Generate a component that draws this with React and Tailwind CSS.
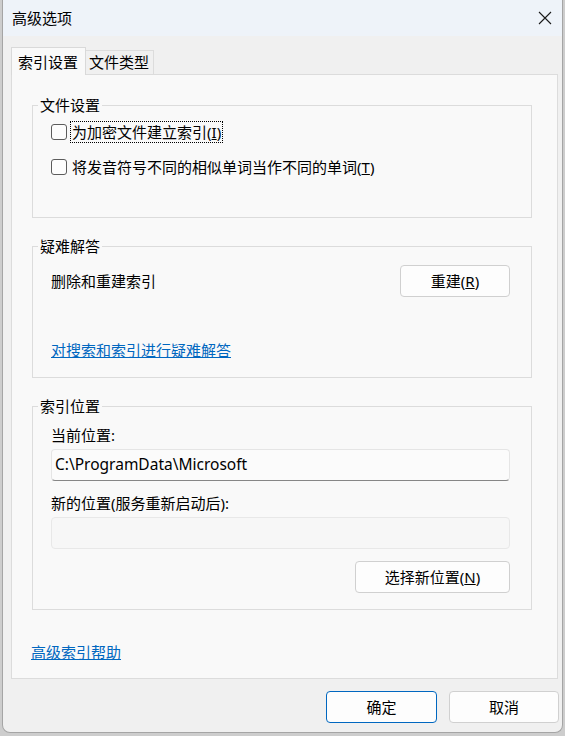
const Btn = ({ children, className = '' }) => (
  <button
    type="button"
    className={`h-[32px] rounded-[4px] border bg-[#fdfdfd] text-[15px] leading-[20px] text-black ${className}`}
  >
    {children}
  </button>
);

const Group = ({ title, className = '', children }) => (
  <fieldset className={`w-[500px] border border-[#dcdcdc] ${className}`}>
    <legend className="ml-[5px] px-[2px] leading-[20px]">{title}</legend>
    {children}
  </fieldset>
);

const Check = ({ label, hotkey, focused }) => (
  <div className="flex items-center h-[22px]">
    <span className="w-[16px] h-[16px] rounded-[3px] border border-[#5c5c5c] bg-[#fdfdfd] shrink-0" />
    <span
      className={`ml-[3px] px-[1px] leading-[20px] border border-dotted ${
        focused ? 'border-black' : 'border-transparent'
      }`}
    >
      {label}(<span className="underline">{hotkey}</span>)
    </span>
  </div>
);

export default function App() {
  return (
    <div className="w-[565px] h-[736px] bg-[#cdcdcd] pl-[2px] pr-[2px] pb-[3px] font-['Noto_Sans','Noto_Sans_CJK_SC',sans-serif] text-[15px] text-black">
      <div className="h-full flex flex-col rounded-b-[8px] border border-t-0 border-[#a5a5a5] bg-[#f0f0f0] overflow-hidden">
        {/* title bar */}
        <div className="h-[36px] shrink-0 flex items-center justify-between bg-[#eef3f9] pl-[9px] pr-[9px]">
          <span className="leading-[20px]">高级选项</span>
          <svg width="14" height="14" viewBox="0 0 14 14" className="mr-[1px]">
            <path d="M1 1 L13 13 M13 1 L1 13" stroke="#1a1a1a" strokeWidth="1.1" fill="none" />
          </svg>
        </div>

        {/* tabs */}
        <div className="flex items-end mt-[11px] ml-[8px]">
          <div className="relative z-10 -mb-px h-[28px] w-[75px] pl-[6px] pt-[2px] flex items-center border border-b-0 border-[#d9d9d9] bg-[#f9f9f9]">
            索引设置
          </div>
          <div className="h-[24px] w-[68px] pl-[3px] flex items-center border border-l-0 border-b-0 border-[#dcdcdc] bg-[#f0f0f0]">
            文件类型
          </div>
        </div>

        {/* tab panel */}
        <div className="ml-[8px] w-[547px] h-[605px] shrink-0 border border-[#dcdcdc] bg-[#f9f9f9] pl-[20px] pt-[20px]">
          <Group title="文件设置" className="h-[123px]">
            <div className="pl-[18px] mt-[6px]">
              <Check label="为加密文件建立索引" hotkey="I" focused />
              <div className="mt-[13px]">
                <Check label="将发音符号不同的相似单词当作不同的单词" hotkey="T" />
              </div>
            </div>
          </Group>

          <Group title="疑难解答" className="h-[142px] mt-[18px]">
            <div className="pl-[18px] pr-[21px]">
              <div className="flex items-center justify-between mt-[9px]">
                <span className="leading-[20px]">删除和重建索引</span>
                <Btn className="w-[110px] border-[#d0d0d0]">
                  重建(<span className="underline">R</span>)
                </Btn>
              </div>
              <a className="block mt-[43px] leading-[20px] text-[#0067c0] underline w-fit">
                对搜索和索引进行疑难解答
              </a>
            </div>
          </Group>

          <Group title="索引位置" className="h-[214px] mt-[18px]">
            <div className="pl-[18px] pr-[21px]">
              <div className="mt-[9px] leading-[20px]">当前位置:</div>
              <div className="mt-[4px] h-[32px] flex items-center pl-[3px] rounded-[4px] border border-[#e5e5e5] border-b-[#868686] bg-[#fbfbfb] text-[15.5px]">
                C:\ProgramData\Microsoft
              </div>
              <div className="mt-[12px] leading-[20px]">新的位置(服务重新启动后):</div>
              <div className="mt-[4px] h-[32px] rounded-[4px] border border-[#e8e8e8] bg-[#f7f7f7]" />
              <div className="flex justify-end mt-[12px]">
                <Btn className="w-[155px] border-[#d0d0d0]">
                  选择新位置(<span className="underline">N</span>)
                </Btn>
              </div>
            </div>
          </Group>

          <a className="block -ml-px mt-[32px] leading-[20px] text-[#0067c0] underline w-fit">
            高级索引帮助
          </a>
        </div>

        {/* dialog buttons */}
        <div className="flex justify-end gap-[12px] mt-[12px] pr-[3px]">
          <Btn className="w-[111px] border-[#0067c0]">确定</Btn>
          <Btn className="w-[110px] border-[#d0d0d0]">取消</Btn>
        </div>
      </div>
    </div>
  );
}
